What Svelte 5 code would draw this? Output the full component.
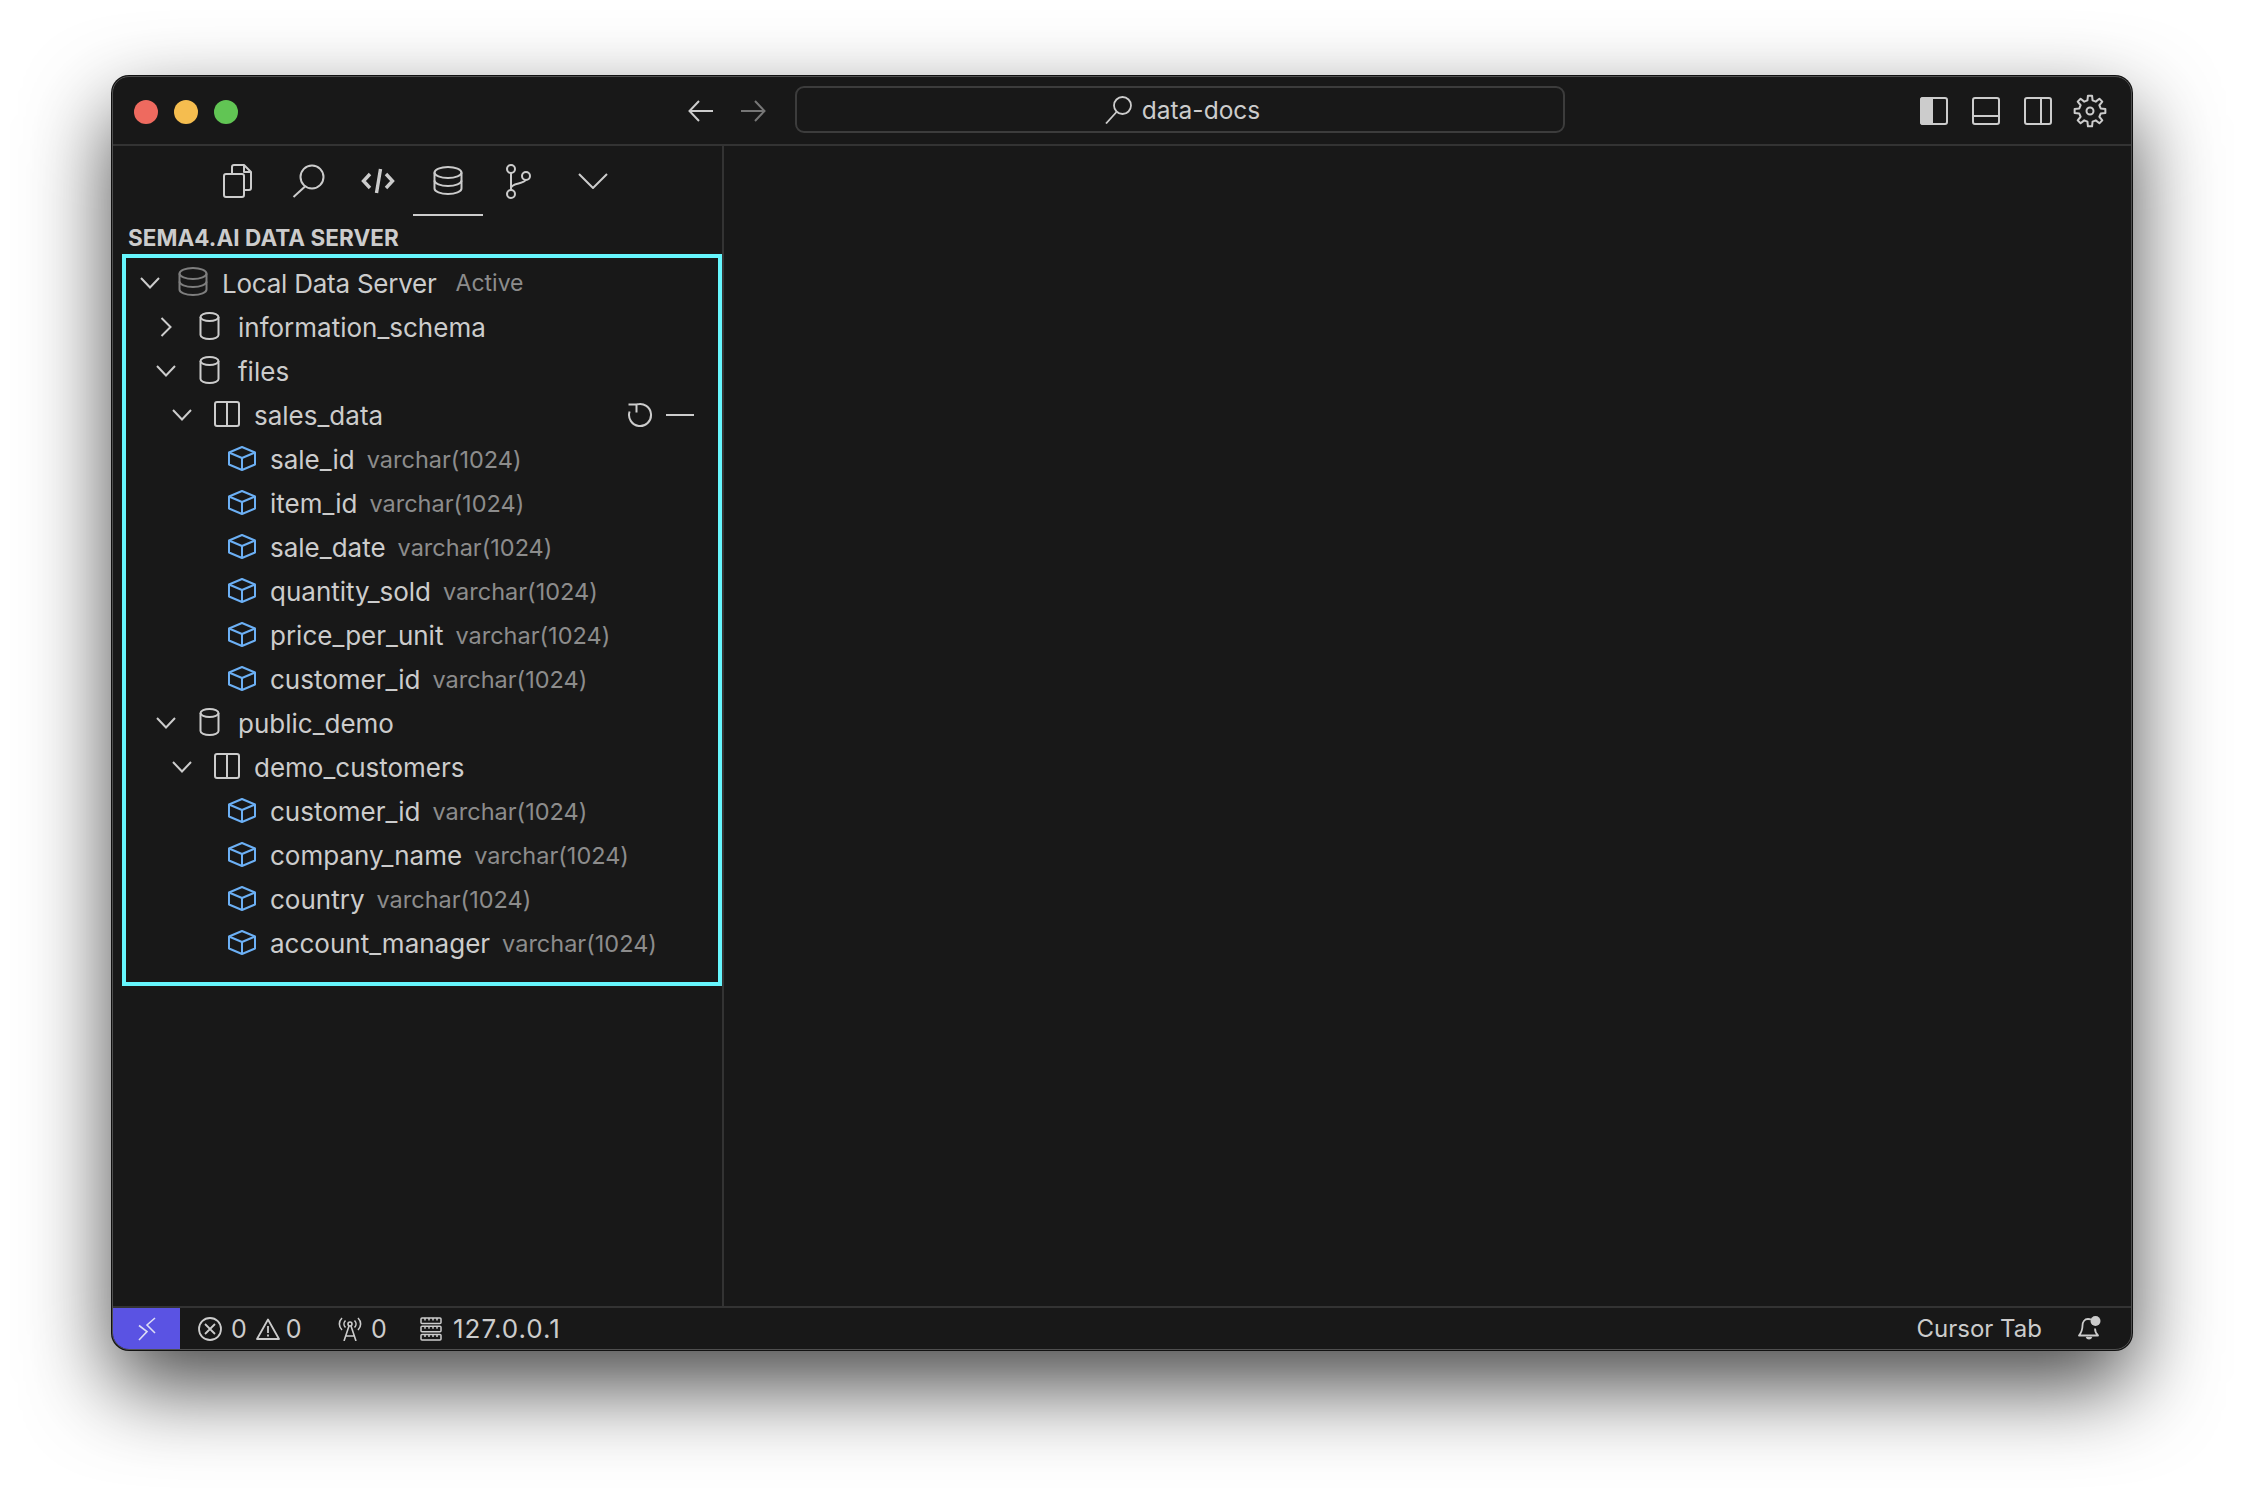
<script>
	// tree rows of the data server panel
	const rows = [
		{ depth: 0, open: true, icon: 'server', name: 'Local Data Server', note: 'Active' },
		{ depth: 1, open: false, icon: 'db', name: 'information_schema' },
		{ depth: 1, open: true, icon: 'db', name: 'files' },
		{ depth: 2, open: true, icon: 'table', name: 'sales_data', actions: true },
		{ depth: 3, icon: 'cube', name: 'sale_id', note: 'varchar(1024)' },
		{ depth: 3, icon: 'cube', name: 'item_id', note: 'varchar(1024)' },
		{ depth: 3, icon: 'cube', name: 'sale_date', note: 'varchar(1024)' },
		{ depth: 3, icon: 'cube', name: 'quantity_sold', note: 'varchar(1024)' },
		{ depth: 3, icon: 'cube', name: 'price_per_unit', note: 'varchar(1024)' },
		{ depth: 3, icon: 'cube', name: 'customer_id', note: 'varchar(1024)' },
		{ depth: 1, open: true, icon: 'db', name: 'public_demo' },
		{ depth: 2, open: true, icon: 'table', name: 'demo_customers' },
		{ depth: 3, icon: 'cube', name: 'customer_id', note: 'varchar(1024)' },
		{ depth: 3, icon: 'cube', name: 'company_name', note: 'varchar(1024)' },
		{ depth: 3, icon: 'cube', name: 'country', note: 'varchar(1024)' },
		{ depth: 3, icon: 'cube', name: 'account_manager', note: 'varchar(1024)' }
	];

	// gear outline with eight teeth
	function gearPath(cx, cy, outer, inner, teeth) {
		const pts = [];
		const step = (Math.PI * 2) / teeth;
		for (let i = 0; i < teeth; i++) {
			const a = i * step - Math.PI / 2;
			const spread = step * 0.17;
			const root = step * 0.3;
			const at = (r, t) => `${(cx + r * Math.cos(t)).toFixed(2)} ${(cy + r * Math.sin(t)).toFixed(2)}`;
			pts.push(at(inner, a - root), at(outer, a - spread), at(outer, a + spread), at(inner, a + root));
		}
		return 'M' + pts.join('L') + 'Z';
	}
</script>

{#snippet dbStack(w, h)}
	<svg width={w} height={h} viewBox="0 0 30 30" fill="none" stroke="currentColor" stroke-width="2">
		<ellipse cx="15" cy="6.500" rx="13.500" ry="5.500" />
		<path d="M1.500 6.500v8c0 3 6 5.500 13.500 5.500s13.500-2.500 13.500-5.500v-8" />
		<path d="M1.500 14.500v8c0 3 6 5.500 13.500 5.500s13.500-2.500 13.500-5.500v-8" />
	</svg>
{/snippet}

<div class="page">
	<div class="window">
		<header class="titlebar">
			<div class="lights">
				<span class="light red"></span>
				<span class="light yellow"></span>
				<span class="light green"></span>
			</div>
			<div class="nav">
				<svg width="26" height="22" viewBox="0 0 26 22" fill="none" stroke="currentColor" stroke-width="2">
					<path d="M25 11H2M11 1 1.500 11 11 21" />
				</svg>
				<svg class="dim" width="26" height="22" viewBox="0 0 26 22" fill="none" stroke="currentColor" stroke-width="2">
					<path d="M1 11h23M15 1l9.500 10L15 21" />
				</svg>
			</div>
			<div class="searchbox">
				<svg width="27" height="28" viewBox="0 0 27 28" fill="none" stroke="currentColor" stroke-width="1.800">
					<circle cx="17.500" cy="9.500" r="8.500" />
					<path d="M11.500 16 1 27.500" />
				</svg>
				<span>data-docs</span>
			</div>
			<div class="layout-icons">
				<svg width="28" height="28" viewBox="0 0 28 28" fill="none" stroke="currentColor" stroke-width="2">
					<rect x="1" y="1" width="26" height="26" rx="2" />
					<path d="M1 3a2 2 0 0 1 2-2h9v26H3a2 2 0 0 1-2-2z" fill="currentColor" />
				</svg>
				<svg width="28" height="28" viewBox="0 0 28 28" fill="none" stroke="currentColor" stroke-width="2">
					<rect x="1" y="1" width="26" height="26" rx="2" />
					<path d="M1 19h26" />
				</svg>
				<svg width="28" height="28" viewBox="0 0 28 28" fill="none" stroke="currentColor" stroke-width="2">
					<rect x="1" y="1" width="26" height="26" rx="2" />
					<path d="M17 1v26" />
				</svg>
				<svg width="34" height="34" viewBox="0 0 34 34" fill="none" stroke="currentColor" stroke-width="2" stroke-linejoin="round">
					<path d={gearPath(17, 17, 15.500, 11, 8)} />
					<circle cx="17" cy="17" r="3.500" />
				</svg>
			</div>
		</header>

		<div class="body">
			<aside class="sidebar">
				<nav class="activity">
					<div class="tab">
						<svg width="30" height="34" viewBox="0 0 30 34" fill="none" stroke="currentColor" stroke-width="2" stroke-linejoin="round">
							<path d="M9 10V3a2 2 0 0 1 2-2h10l7 7v16a2 2 0 0 1-2 2h-5" />
							<path d="M21 1v7h7" />
							<rect x="1" y="10" width="20" height="23" rx="2" />
						</svg>
					</div>
					<div class="tab">
						<svg width="33" height="34" viewBox="0 0 33 34" fill="none" stroke="currentColor" stroke-width="2">
							<circle cx="20" cy="13" r="11.500" />
							<path d="M13 22.500 1.500 33" />
						</svg>
					</div>
					<div class="tab">
						<svg width="34" height="26" viewBox="0 0 34 26" fill="none" stroke="currentColor" stroke-width="3.400">
							<path d="M9 6 2.500 13 9 20M25 6l6.500 7-6.500 7M19.500 1l-4 24" />
						</svg>
					</div>
					<div class="tab active">
						{@render dbStack(30, 30)}
					</div>
					<div class="tab">
						<svg width="26" height="35" viewBox="0 0 26 35" fill="none" stroke="currentColor" stroke-width="2">
							<circle cx="6" cy="5" r="4" />
							<circle cx="6" cy="30" r="4" />
							<circle cx="21" cy="12" r="4" />
							<path d="M6 9v17M6 24c0-5 13-4 14.500-8" />
						</svg>
					</div>
					<div class="tab more">
						<svg width="30" height="16" viewBox="0 0 30 16" fill="none" stroke="currentColor" stroke-width="2">
							<path d="M1 1l14 14L29 1" />
						</svg>
					</div>
				</nav>
				<h2 class="panel-title">SEMA4.AI DATA SERVER</h2>
				<div class="tree">
					{#each rows as row}
						<div class="row" style:padding-left="{10 + row.depth * 16}px">
							<span class="chevron">
								{#if row.open === true}
									<svg width="20" height="12" viewBox="0 0 20 12" fill="none" stroke="currentColor" stroke-width="2">
										<path d="M1 1l9 9.500L19 1" />
									</svg>
								{:else if row.open === false}
									<svg width="12" height="20" viewBox="0 0 12 20" fill="none" stroke="currentColor" stroke-width="2">
										<path d="M1.500 1l9 9-9 9" />
									</svg>
								{/if}
							</span>
							<span class="icon">
								{#if row.icon === 'server'}
									<span class="server-icon">{@render dbStack(30, 30)}</span>
								{:else if row.icon === 'db'}
									<svg width="21" height="28" viewBox="0 0 21 28" fill="none" stroke="currentColor" stroke-width="2">
										<ellipse cx="10.500" cy="5" rx="9" ry="4" />
										<path d="M1.500 5v18c0 2.200 4 4 9 4s9-1.800 9-4V5" />
									</svg>
								{:else if row.icon === 'table'}
									<svg class="table-icon" width="26" height="26" viewBox="0 0 26 26" fill="none" stroke="currentColor" stroke-width="2">
										<rect x="1" y="1" width="24" height="24" rx="2" />
										<path d="M13 1v24" />
									</svg>
								{:else}
									<svg class="cube" width="28" height="25" viewBox="0 0 28 25" fill="none" stroke="currentColor" stroke-width="2" stroke-linejoin="round">
										<path d="M14 1 27 6.500v12L14 24 1 18.500v-12z" />
										<path d="M1 6.500 14 12l13-5.500M14 12v12" />
									</svg>
								{/if}
							</span>
							<span class="name" class:root-name={row.depth === 0}>{row.name}</span>
							{#if row.note}
								<span class="note" class:active-note={row.depth === 0}>{row.note}</span>
							{/if}
							{#if row.actions}
								<span class="actions">
									<svg width="26" height="26" viewBox="0 0 26 26" fill="none" stroke="currentColor" stroke-width="2">
										<path d="M10 2.400A11 11 0 1 1 2.600 9.500" />
										<path d="M1.500 2.500h8v8" />
									</svg>
									<span class="minus"></span>
								</span>
							{/if}
						</div>
					{/each}
				</div>
			</aside>
			<main class="editor"></main>
		</div>

		<footer class="statusbar">
			<div class="remote">
				<svg width="18" height="24" viewBox="0 0 18 24" fill="none" stroke="currentColor" stroke-width="1.600">
					<path d="M17 1 9 8l8 8M1 8.500l8 6L1 23" />
				</svg>
			</div>
			<div class="status-group problems">
				<svg width="24" height="24" viewBox="0 0 24 24" fill="none" stroke="currentColor" stroke-width="1.800">
					<circle cx="12" cy="12" r="11" />
					<path d="M7 7l10 10M17 7 7 17" />
				</svg>
				<span>0</span>
				<svg width="24" height="22" viewBox="0 0 24 22" fill="none" stroke="currentColor" stroke-width="1.800" stroke-linejoin="round">
					<path d="M12 1.500 23 21H1z" />
					<path d="M12 8v7M12 16.500v2" />
				</svg>
				<span>0</span>
			</div>
			<div class="status-group ports">
				<svg width="24" height="24" viewBox="0 0 24 24" fill="none" stroke="currentColor" stroke-width="1.600">
					<path d="M4 1C0.500 4.500 0.500 9.500 4 13M20 1c3.500 3.500 3.500 8.500 0 12M7.500 3.500c-2 2-2 5 0 7M16.500 3.500c2 2 2 5 0 7" />
					<circle cx="12" cy="7" r="2" />
					<path d="M11 9 6 24M13 9l5 15M8 19h8" />
				</svg>
				<span>0</span>
			</div>
			<div class="status-group host">
				<svg width="22" height="24" viewBox="0 0 22 24" fill="none" stroke="currentColor" stroke-width="1.500">
					<rect x="1" y="1" width="20" height="5.500" rx="1" />
					<rect x="1" y="9.250" width="20" height="5.500" rx="1" />
					<rect x="1" y="17.500" width="20" height="5.500" rx="1" />
					<path d="M5 1v2.500M9 1v2.500M13 1v2.500M17 1v2.500M5 9.250v2.500M9 9.250v2.500M13 9.250v2.500M17 9.250v2.500M5 17.500V20M9 17.500V20M13 17.500V20M17 17.500V20" />
				</svg>
				<span class="host-addr">127.0.0.1</span>
			</div>
			<div class="status-right">
				<span>Cursor Tab</span>
				<svg width="23" height="25" viewBox="0 0 23 25" fill="none" stroke="currentColor" stroke-width="1.800" stroke-linejoin="round">
					<path d="M13 3.500c-1-.5-2-.5-3-.5-3.500 0-5.500 3-5.500 6.500 0 5-1.500 7.500-3.500 10h19c-2-2-3-4.500-3-7" />
					<path d="M8.500 21a2.800 2.800 0 0 0 5 0" fill="currentColor" />
					<circle cx="17.500" cy="5" r="5" fill="currentColor" stroke="none" />
				</svg>
			</div>
		</footer>
	</div>
</div>

<style>
	:global(body) {
		margin: 0;
		background: #fff;
	}

	.page {
		width: 2244px;
		height: 1498px;
		padding: 76px 0 0 112px;
		box-sizing: border-box;
		overflow: hidden;
		font-family: Inter, "Liberation Sans", sans-serif;
	}

	.window {
		width: 2020px;
		height: 1274px;
		box-sizing: border-box;
		display: flex;
		flex-direction: column;
		background: #181818;
		color: #cccccc;
		border: 1px solid #4f4f4f;
		border-radius: 17px;
		box-shadow: 0 0 0 1px #111, 0 36px 85px rgba(0, 0, 0, 0.72);
		overflow: hidden;
	}

	.titlebar {
		height: 67px;
		flex: none;
		display: flex;
		align-items: center;
		border-bottom: 2px solid #333;
	}

	.lights {
		display: flex;
		gap: 16px;
		padding-left: 21px;
		width: 575px;
		box-sizing: border-box;
		margin-top: 2px;
	}

	.light {
		width: 24px;
		height: 24px;
		border-radius: 50%;
	}

	.red {
		background: #ee6a5f;
	}

	.yellow {
		background: #f5bd4f;
	}

	.green {
		background: #61c554;
	}

	.nav {
		display: flex;
		gap: 26px;
		width: 107px;
	}

	.dim {
		color: #767676;
	}

	.searchbox {
		width: 770px;
		height: 47px;
		box-sizing: border-box;
		border: 2px solid #3c3c3c;
		border-radius: 9px;
		display: flex;
		align-items: center;
		justify-content: center;
		gap: 10px;
		padding-left: 5px;
		font-size: 24.500px;
		margin-top: -2px;
	}

	.layout-icons {
		display: flex;
		align-items: center;
		gap: 24px;
		margin-left: auto;
		padding-right: 24px;
	}

	.layout-icons svg:last-child {
		margin-left: -3px;
	}

	.body {
		flex: 1;
		display: flex;
		min-height: 0;
	}

	.sidebar {
		width: 611px;
		flex: none;
		border-right: 2px solid #333;
		box-sizing: border-box;
	}

	.activity {
		height: 70px;
		display: flex;
		padding-left: 90px;
	}

	.tab {
		width: 70px;
		box-sizing: border-box;
		padding-top: 2px;
		display: flex;
		align-items: center;
		justify-content: center;
		border-bottom: 2px solid transparent;
	}

	.tab.active {
		border-bottom-color: #cccccc;
	}

	.tab.more {
		margin-left: 5px;
	}

	.panel-title {
		margin: 0;
		height: 38px;
		padding-left: 15px;
		font-size: 22.500px;
		font-weight: 700;
		line-height: 44px;
		letter-spacing: 0.05px;
		color: #cccccc;
	}

	.tree {
		margin-left: 9px;
		width: 600px;
		height: 732px;
		box-sizing: border-box;
		border: 4px solid #66f6fd;
		padding-top: 3px;
	}

	.row {
		height: 44px;
		display: flex;
		align-items: center;
		font-size: 26px;
	}

	.chevron {
		width: 28px;
		flex: none;
		display: flex;
		justify-content: center;
	}

	.icon {
		width: 58px;
		flex: none;
		display: flex;
		justify-content: center;
		margin-top: -2px;
	}

	.server-icon {
		display: flex;
		color: #7e7e7e;
	}

	.table-icon {
		margin-left: 3px;
	}

	.cube {
		color: #6cb0f5;
		margin-left: 2px;
	}

	.root-name {
		letter-spacing: -0.24px;
	}

	.note {
		margin-left: 12px;
		font-size: 23.500px;
		color: #8c8c8c;
	}

	.note.active-note {
		margin-left: 19px;
		font-size: 23px;
	}

	.actions {
		margin-left: auto;
		padding-right: 24px;
		display: flex;
		align-items: center;
		gap: 13px;
	}

	.minus {
		width: 28px;
		height: 2px;
		background: #cccccc;
	}

	.editor {
		flex: 1;
	}

	.statusbar {
		height: 41px;
		flex: none;
		display: flex;
		align-items: center;
		border-top: 2px solid #333;
		font-size: 25px;
	}

	.remote {
		width: 67px;
		height: 100%;
		background: #5a53e3;
		color: #dcdcf5;
		display: flex;
		align-items: center;
		justify-content: center;
		flex: none;
	}

	.status-group {
		display: flex;
		align-items: center;
		gap: 9px;
	}

	.problems {
		padding-left: 18px;
		width: 140px;
		box-sizing: border-box;
	}

	.problems svg:nth-of-type(2) {
		margin-right: -3px;
	}

	.ports {
		padding-left: 18px;
		width: 91px;
		box-sizing: border-box;
	}

	.host {
		padding-left: 9px;
		gap: 11px;
	}

	.host-addr {
		font-size: 26px;
		letter-spacing: 1px;
	}

	.status-right {
		margin-left: auto;
		display: flex;
		align-items: center;
		gap: 36px;
		padding-right: 30px;
		font-size: 24px;
	}
</style>
